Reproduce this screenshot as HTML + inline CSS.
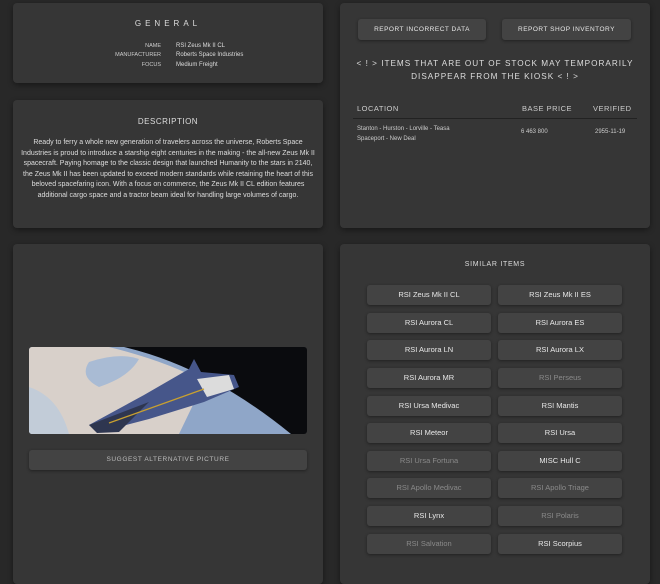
<!DOCTYPE html>
<html><head><style>
*{box-sizing:border-box;margin:0;padding:0}
body{width:660px;height:572px;background:#282828;font-family:"Liberation Sans",sans-serif;color:#ddd;position:relative;overflow:hidden}
.p{position:absolute;background:#363636;border-radius:4px;box-shadow:0 2px 6px rgba(0,0,0,.4)}
.t{position:absolute;text-align:center;width:100%;font-size:8px;letter-spacing:1px;color:#ddd}
.btn{position:absolute;background:#434343;border-radius:3px;box-shadow:0 1px 3px rgba(0,0,0,.4);font-size:7.5px;color:#e8e8e8;text-align:center;line-height:20px;height:20px;width:124px}
.btn.d{color:#8a8a8a}
.s{font-size:6px;position:absolute}
</style></head><body>
<div class="p" style="left:13px;top:3px;width:310px;height:80px">
 <div class="t" style="top:16px;letter-spacing:4px;font-size:8px">GENERAL</div>
 <div class="s" style="right:162px;top:39px;text-align:right;line-height:9.3px;color:#ccc;font-size:5.5px">NAME<br>MANUFACTURER<br>FOCUS</div>
 <div class="s" style="left:163px;top:39px;line-height:9.3px;color:#ddd">RSI Zeus Mk II CL<br>Roberts Space Industries<br>Medium Freight</div>
</div>
<div class="p" style="left:13px;top:100px;width:310px;height:128px">
 <div class="t" style="top:17px;font-size:8px;letter-spacing:.5px">DESCRIPTION</div>
 <div style="position:absolute;left:8px;right:8px;top:38px;font-size:7px;line-height:10.6px;text-align:center;color:#ddd">Ready to ferry a whole new generation of travelers across the universe, Roberts Space Industries is proud to introduce a starship eight centuries in the making - the all-new Zeus Mk II spacecraft. Paying homage to the classic design that launched Humanity to the stars in 2140, the Zeus Mk II has been updated to exceed modern standards while retaining the heart of this beloved spacefaring icon. With a focus on commerce, the Zeus Mk II CL edition features additional cargo space and a tractor beam ideal for handling large volumes of cargo.</div>
</div>
<div class="p" style="left:340px;top:3px;width:310px;height:225px">
 <div class="btn" style="left:18px;top:16px;width:128px;height:21px;line-height:21px;font-size:6.5px;letter-spacing:.5px">REPORT INCORRECT DATA</div>
 <div class="btn" style="left:162px;top:16px;width:129px;height:21px;line-height:21px;font-size:6.5px;letter-spacing:.5px">REPORT SHOP INVENTORY</div>
 <div class="t" style="top:54px;font-size:8.2px;line-height:13px;letter-spacing:1px;color:#ddd">&lt; ! &gt; ITEMS THAT ARE OUT OF STOCK MAY TEMPORARILY<br>DISAPPEAR FROM THE KIOSK &lt; ! &gt;</div>
 <div class="s" style="left:17px;top:101px;font-size:7.5px;letter-spacing:.5px;color:#ccc">LOCATION</div>
 <div class="s" style="left:182px;top:101px;font-size:7.5px;letter-spacing:.5px;color:#ccc">BASE PRICE</div>
 <div class="s" style="left:253px;top:101px;font-size:7.5px;letter-spacing:.5px;color:#ccc">VERIFIED</div>
 <div style="position:absolute;left:13px;top:115px;width:284px;height:1px;background:#222"></div>
 <div class="s" style="left:17px;top:121px;line-height:10px;color:#ccc">Stanton - Hurston - Lorville - Teasa<br>Spaceport - New Deal</div>
 <div class="s" style="left:181px;top:126px;color:#ccc">6 463 800</div>
 <div class="s" style="left:255px;top:126px;color:#ccc">2955-11-19</div>
</div>
<div class="p" style="left:13px;top:244px;width:310px;height:340px">
 <svg style="position:absolute;left:16px;top:103px;border-radius:3px" width="278" height="87" viewBox="0 0 278 87">
  <rect width="278" height="87" fill="#0a0b0e"/>
  <path d="M0 0 L95 0 Q180 20 262 87 L0 87Z" fill="#8fa6c8"/>
  <path d="M0 0 L80 0 Q140 15 175 35 L150 87 L0 87Z" fill="#d8d0ca"/>
  <path d="M60 15 Q90 5 110 12 Q100 30 70 40 Q50 30 60 15Z" fill="#a9bbd4"/>
  <path d="M0 40 Q30 50 40 87 L0 87Z" fill="#c2ccd8"/>
  <path d="M60 78 L115 48 L160 22 L165 12 L172 25 L205 28 L210 40 L175 55 L120 72 L70 85Z" fill="#46568a"/>
  <path d="M168 32 L200 28 L205 42 L178 50Z" fill="#dcdcdc"/>
  <path d="M60 78 L120 55 L90 85 L68 86Z" fill="#2e3650"/>
  <path d="M80 76 L175 42" stroke="#c8a030" stroke-width="1.3"/>
 </svg>
 <div class="btn" style="left:16px;top:206px;width:278px;font-size:6.5px;letter-spacing:.6px;color:#bbb">SUGGEST ALTERNATIVE PICTURE</div>
</div>
<div class="p" style="left:340px;top:244px;width:310px;height:340px">
 <div class="t" style="top:17px;font-size:7px;letter-spacing:.7px">SIMILAR ITEMS</div>
</div>
<div class="btn" style="left:367px;top:285px">RSI Zeus Mk II CL</div><div class="btn" style="left:498px;top:285px">RSI Zeus Mk II ES</div>
<div class="btn" style="left:367px;top:313px">RSI Aurora CL</div><div class="btn" style="left:498px;top:313px">RSI Aurora ES</div>
<div class="btn" style="left:367px;top:340px">RSI Aurora LN</div><div class="btn" style="left:498px;top:340px">RSI Aurora LX</div>
<div class="btn" style="left:367px;top:368px">RSI Aurora MR</div><div class="btn d" style="left:498px;top:368px">RSI Perseus</div>
<div class="btn" style="left:367px;top:396px">RSI Ursa Medivac</div><div class="btn" style="left:498px;top:396px">RSI Mantis</div>
<div class="btn" style="left:367px;top:423px">RSI Meteor</div><div class="btn" style="left:498px;top:423px">RSI Ursa</div>
<div class="btn d" style="left:367px;top:451px">RSI Ursa Fortuna</div><div class="btn" style="left:498px;top:451px">MISC Hull C</div>
<div class="btn d" style="left:367px;top:478px">RSI Apollo Medivac</div><div class="btn d" style="left:498px;top:478px">RSI Apollo Triage</div>
<div class="btn" style="left:367px;top:506px">RSI Lynx</div><div class="btn d" style="left:498px;top:506px">RSI Polaris</div>
<div class="btn d" style="left:367px;top:534px">RSI Salvation</div><div class="btn" style="left:498px;top:534px">RSI Scorpius</div>
</body></html>
